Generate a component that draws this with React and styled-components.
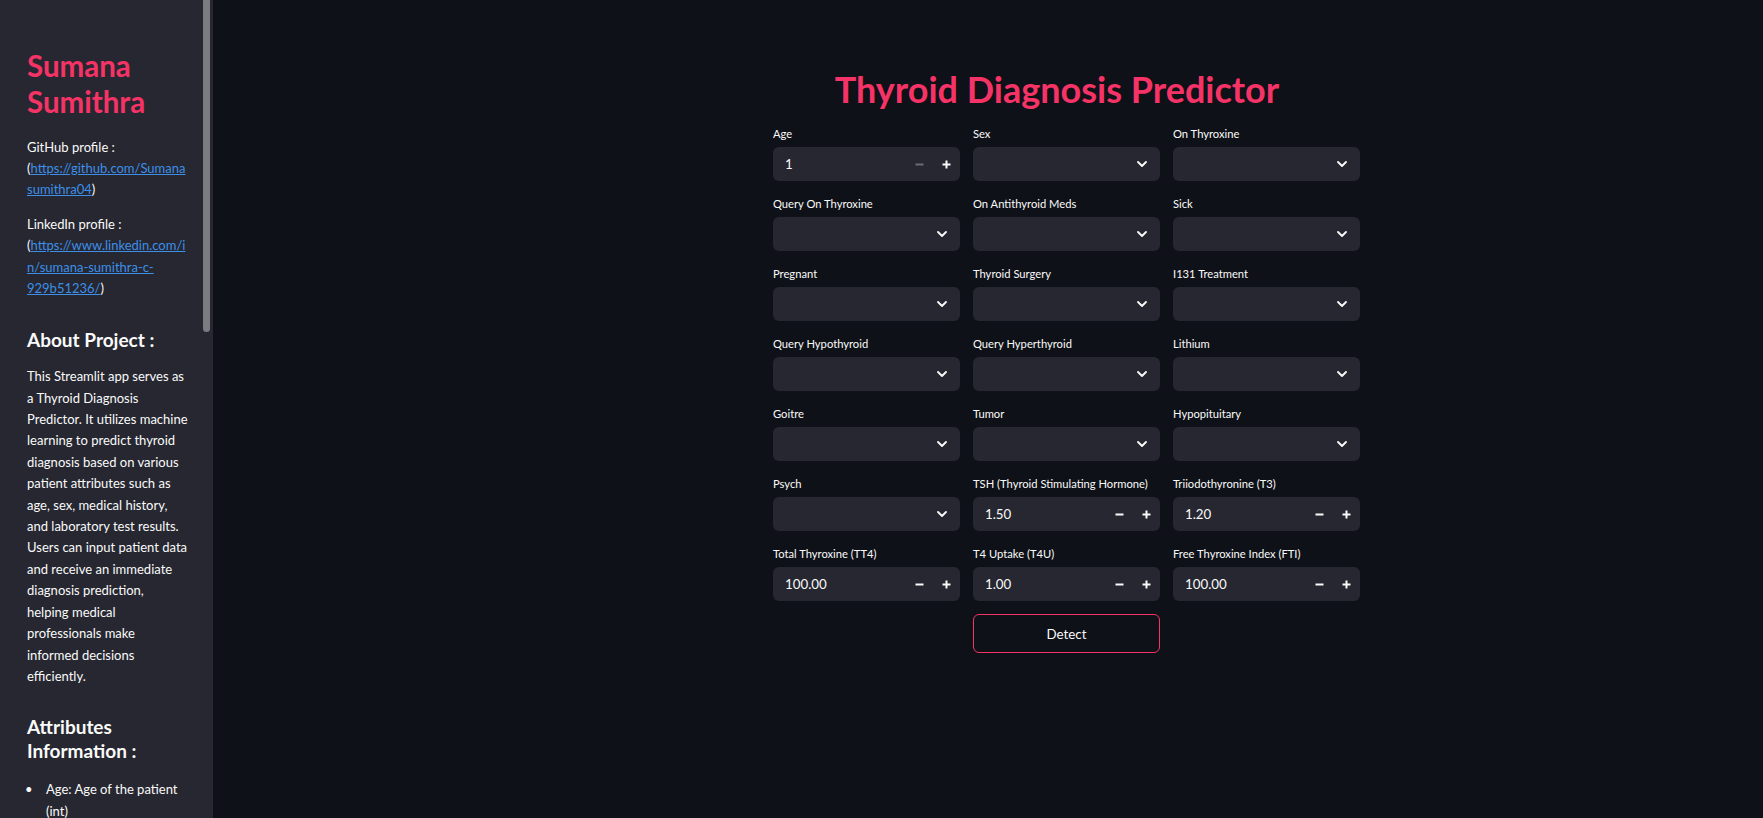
import React from "react";
import styled, { createGlobalStyle } from "styled-components";

const FONT = `"Lato", "Noto Sans", "DejaVu Sans", sans-serif`;
const PINK = "#f63366";

const Global = createGlobalStyle`
  html, body { margin: 0; padding: 0; height: 100%; overflow: hidden; background: #0e1117; }
  #root { height: 100%; }
  * { box-sizing: border-box; }
`;

const Shell = styled.div`
  display: flex;
  height: 100vh;
  font-family: ${FONT};
  color: #fafafa;
`;

const Sidebar = styled.aside`
  position: relative;
  width: 213px;
  flex: none;
  background: #262730;
  overflow: hidden;
`;

const ScrollThumb = styled.div`
  position: absolute;
  top: 0;
  right: 3px;
  width: 7px;
  height: 332px;
  background: #7b7b81;
  border-radius: 0 0 4px 4px;
`;

const SideInner = styled.div`
  padding: 48px 22px 140px 27px;
`;

const Name = styled.h1`
  margin: 0 0 16.5px;
  font-size: 29.5px;
  line-height: 36px;
  font-weight: 700;
  color: ${PINK};
`;

const SideP = styled.p`
  margin: 0 0 13.3px;
  font-size: 13px;
  line-height: 21.4px;
  white-space: ${(p) => (p.$nowrap ? "nowrap" : "normal")};
`;

const Link = styled.a`
  color: #3d8fe8;
  text-decoration: underline;
`;

const SideH2 = styled.h2`
  margin: ${(p) => p.$mt}px 0 ${(p) => p.$mb}px;
  font-size: 19px;
  line-height: 24px;
  font-weight: 700;
`;

const List = styled.ul`
  margin: 0;
  padding-left: 19px;
  list-style: none;
  font-size: 13px;
  line-height: 21.4px;
`;

const Item = styled.li`
  display: flex;
  margin: 0 0 4px;
  &::before {
    content: "•";
    flex: none;
    width: 21px;
    margin-left: -21px;
  }
`;

const Main = styled.main`
  flex: 1;
  background: #0e1117;
  padding: 67px 0 0 560px;
  overflow: hidden;
`;

const Block = styled.div`
  width: 587px;
`;

const Title = styled.h1`
  margin: 0 0 15px;
  padding-right: 19px;
  text-align: center;
  font-size: 36px;
  line-height: 44px;
  font-weight: 700;
  color: ${PINK};
`;

const Grid = styled.div`
  display: grid;
  grid-template-columns: repeat(3, 187px);
  column-gap: 13px;
  row-gap: 15px;
`;

const Field = styled.div`
  display: flex;
  flex-direction: column;
`;

const Label = styled.label`
  font-size: 11.2px;
  line-height: 16px;
  margin-bottom: 5px;
  white-space: nowrap;
`;

const Box = styled.div`
  height: 34px;
  background: #262730;
  border-radius: 6px;
  display: flex;
  align-items: center;
  padding-left: 12px;
  padding-right: ${(p) => (p.$select ? "13px" : "0")};
`;

const Value = styled.span`
  flex: 1;
  font-size: 13.3px;
`;

const Step = styled.span`
  width: 26.7px;
  height: 100%;
  display: flex;
  align-items: center;
  justify-content: center;
  color: ${(p) => (p.$disabled ? "#6c6d74" : "#fafafa")};
`;

const ButtonRow = styled.div`
  display: grid;
  grid-template-columns: repeat(3, 187px);
  column-gap: 13px;
  margin-top: 13px;
`;

const Button = styled.button`
  grid-column: 2;
  height: 39px;
  border: 1px solid ${PINK};
  border-radius: 6px;
  background: #0e1117;
  color: #fafafa;
  font-family: ${FONT};
  font-size: 13.3px;
`;

const Minus = () => (
  <svg width="9" height="9" viewBox="0 0 9 9">
    <rect x="0.5" y="3.5" width="8" height="2" fill="currentColor" />
  </svg>
);
const Plus = () => (
  <svg width="9" height="9" viewBox="0 0 9 9">
    <rect x="0.5" y="3.5" width="8" height="2" fill="currentColor" />
    <rect x="3.5" y="0.5" width="2" height="8" fill="currentColor" />
  </svg>
);
const Chevron = () => (
  <svg width="10" height="6" viewBox="0 0 10 6">
    <path d="M1 1 L5 5 L9 1" fill="none" stroke="#fafafa" strokeWidth="1.8" strokeLinecap="round" strokeLinejoin="round" />
  </svg>
);

const fields = [
  { label: "Age", value: "1", minDisabled: true },
  { label: "Sex" },
  { label: "On Thyroxine" },
  { label: "Query On Thyroxine" },
  { label: "On Antithyroid Meds" },
  { label: "Sick" },
  { label: "Pregnant" },
  { label: "Thyroid Surgery" },
  { label: "I131 Treatment" },
  { label: "Query Hypothyroid" },
  { label: "Query Hyperthyroid" },
  { label: "Lithium" },
  { label: "Goitre" },
  { label: "Tumor" },
  { label: "Hypopituitary" },
  { label: "Psych" },
  { label: "TSH (Thyroid Stimulating Hormone)", value: "1.50" },
  { label: "Triiodothyronine (T3)", value: "1.20" },
  { label: "Total Thyroxine (TT4)", value: "100.00" },
  { label: "T4 Uptake (T4U)", value: "1.00" },
  { label: "Free Thyroxine Index (FTI)", value: "100.00" },
];

const attributes = [
  "Sex: Sex of the patient (str)",
  "On Thyroxine: Whether patient is on thyroxine (bool)",
  "Query On Thyroxine: Whether patient is on thyroxine (bool)",
  "On Antithyroid Meds: Whether patient is on antithyroid meds (bool)",
  "Sick: Whether patient is sick (bool)",
  "Pregnant: Whether patient is pregnant (bool)",
];

const aboutLines = [
  "This Streamlit app serves as",
  "a Thyroid Diagnosis",
  "Predictor. It utilizes machine",
  "learning to predict thyroid",
  "diagnosis based on various",
  "patient attributes such as",
  "age, sex, medical history,",
  "and laboratory test results.",
  "Users can input patient data",
  "and receive an immediate",
  "diagnosis prediction,",
  "helping medical",
  "professionals make",
  "informed decisions",
  "efficiently.",
];

export default function App() {
  return (
    <>
      <Global />
      <Shell>
        <Sidebar>
          <SideInner>
            <Name>Sumana<br />Sumithra</Name>
            <SideP $nowrap>
              GitHub profile :<br />(
              <Link href="#">https://github.com/Sumana<br />sumithra04</Link>)
            </SideP>
            <SideP $nowrap>
              LinkedIn profile :<br />(
              <Link href="#">https://www.linkedin.com/i<br />n/sumana-sumithra-c-<br />929b51236/</Link>)
            </SideP>
            <SideH2 $mt={28} $mb={14.6}>About Project :</SideH2>
            <SideP $nowrap>
              {aboutLines.map((l, i) => (
                <React.Fragment key={i}>
                  {l}
                  {i < aboutLines.length - 1 && <br />}
                </React.Fragment>
              ))}
            </SideP>
            <SideH2 $mt={28} $mb={16}>Attributes<br />Information :</SideH2>
            <List>
              <Item><span>Age: Age of the patient<br />(int)</span></Item>
              {attributes.map((a) => (
                <Item key={a}><span>{a}</span></Item>
              ))}
            </List>
          </SideInner>
          <ScrollThumb />
        </Sidebar>
        <Main>
          <Block>
            <Title>Thyroid Diagnosis Predictor</Title>
            <Grid>
              {fields.map((f) => (
                <Field key={f.label}>
                  <Label>{f.label}</Label>
                  {f.value !== undefined ? (
                    <Box>
                      <Value>{f.value}</Value>
                      <Step $disabled={f.minDisabled}><Minus /></Step>
                      <Step><Plus /></Step>
                    </Box>
                  ) : (
                    <Box $select>
                      <Value />
                      <Chevron />
                    </Box>
                  )}
                </Field>
              ))}
            </Grid>
            <ButtonRow>
              <Button>Detect</Button>
            </ButtonRow>
          </Block>
        </Main>
      </Shell>
    </>
  );
}
